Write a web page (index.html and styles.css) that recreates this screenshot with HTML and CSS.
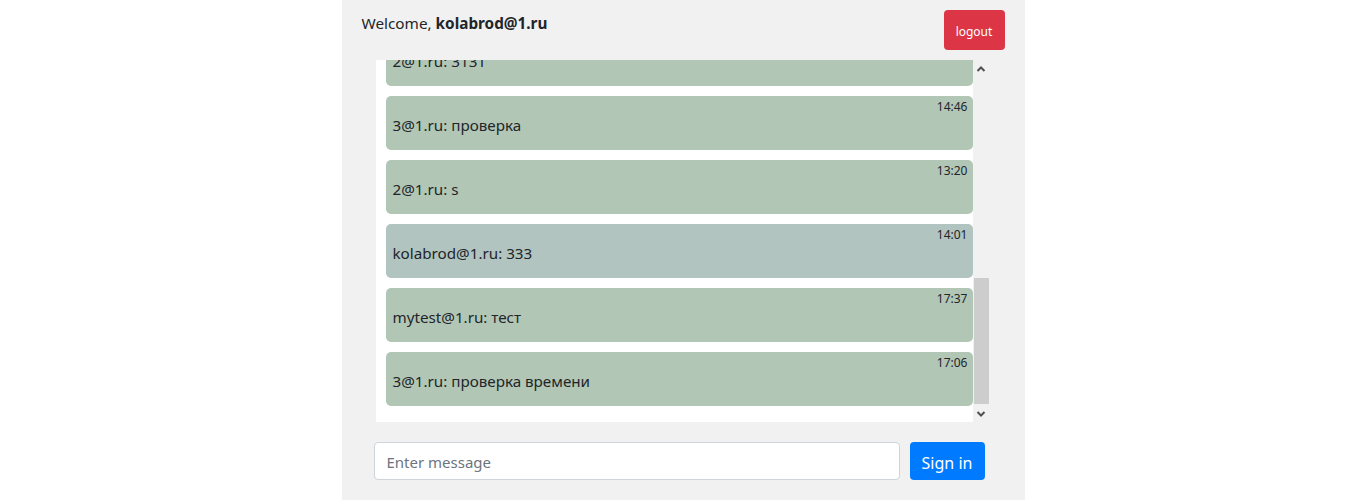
FILE: index.html
```html
<!DOCTYPE html>
<html>
<head>
<meta charset="utf-8">
<link rel="stylesheet" href="styles.css">
</head>
<body>
<div class="app">
  <header class="top">
    <div class="welcome">Welcome, <b>kolabrod@1.ru</b></div>
    <button class="logout">logout</button>
  </header>
  <div class="chat">
    <div class="viewport">
      <div class="list">
        <div class="msg"><div class="time">12:01</div><div class="text">2@1.ru: привет</div></div>
        <div class="msg"><div class="time">12:03</div><div class="text">3@1.ru: 111</div></div>
        <div class="msg me"><div class="time">12:05</div><div class="text">kolabrod@1.ru: hello</div></div>
        <div class="msg"><div class="time">12:10</div><div class="text">mytest@1.ru: 222</div></div>
        <div class="msg"><div class="time">12:14</div><div class="text">2@1.ru: test</div></div>
        <div class="msg"><div class="time">12:20</div><div class="text">3@1.ru: ок</div></div>
        <div class="msg me"><div class="time">12:31</div><div class="text">kolabrod@1.ru: 123</div></div>
        <div class="msg"><div class="time">12:45</div><div class="text">mytest@1.ru: привет</div></div>
        <div class="msg"><div class="time">13:02</div><div class="text">2@1.ru: 3131</div></div>
        <div class="msg"><div class="time">14:46</div><div class="text">3@1.ru: проверка</div></div>
        <div class="msg"><div class="time">13:20</div><div class="text">2@1.ru: s</div></div>
        <div class="msg me"><div class="time">14:01</div><div class="text">kolabrod@1.ru: 333</div></div>
        <div class="msg"><div class="time">17:37</div><div class="text">mytest@1.ru: тест</div></div>
        <div class="msg"><div class="time">17:06</div><div class="text">3@1.ru: проверка времени</div></div>
      </div>
    </div>
    <div class="sbar" aria-hidden="true">
      <div class="arrow"><svg width="10" height="10" viewBox="0 0 10 10"><path d="M1.5 7 L5 3.5 L8.5 7" fill="none" stroke="#505050" stroke-width="2"/></svg></div>
      <div class="track"><div class="thumb"></div></div>
      <div class="arrow"><svg width="10" height="10" viewBox="0 0 10 10"><path d="M1.5 3 L5 6.5 L8.5 3" fill="none" stroke="#505050" stroke-width="2"/></svg></div>
    </div>
  </div>
  <form class="send">
    <input class="field" type="text" placeholder="Enter message">
    <button class="signin" type="button">Sign in</button>
  </form>
</div>
</body>
</html>
```

FILE: styles.css
```css
html, body {
  margin: 0;
  padding: 0;
  background: #ffffff;
  font-family: "Noto Sans", "Open Sans", "Liberation Sans", sans-serif;
  color: #212529;
}
.app {
  width: 683px;
  height: 500px;
  margin: 0 auto;
  background: #f1f1f1;
  display: flex;
  flex-direction: column;
}
.top {
  display: flex;
  justify-content: space-between;
  align-items: flex-start;
  height: 60px;
  padding: 0 20px 0 20px;
}
.welcome {
  font-size: 15.3px;
  line-height: 24px;
  margin-top: 11px;
}
.welcome b { font-weight: 700; }
.logout {
  margin-top: 10px;
  width: 61px;
  height: 40px;
  border: none;
  border-radius: 4px;
  background: #dc3545;
  color: #fff;
  font-family: inherit;
  font-size: 12px;
  padding: 2px 0 0 0;
}
.chat {
  margin-left: 34px;
  width: 613px;
  height: 362px;
  background: #fff;
  display: flex;
}
.viewport {
  flex: 1;
  overflow-y: scroll;
  scrollbar-width: none;
  display: flex;
  flex-direction: column-reverse;
}
.viewport::-webkit-scrollbar { display: none; }
.list {
  padding: 10px 0 6px 10px;
}
.msg {
  height: 54px;
  box-sizing: border-box;
  margin-bottom: 10px;
  background: #b2c6b6;
  border-radius: 5px;
  padding: 4px 5px 0 7px;
}
.msg.me { background: #b2c4bf; }
.time {
  text-align: right;
  font-size: 12px;
  line-height: 13px;
}
.text {
  font-size: 15.2px;
  line-height: 24px;
}
.sbar {
  width: 16px;
  flex: none;
  background: #f1f1f1;
  display: flex;
  flex-direction: column;
}
.arrow {
  height: 17px;
  display: flex;
  align-items: center;
  justify-content: center;
}
.track {
  flex: 1;
  display: flex;
  flex-direction: column;
  justify-content: flex-end;
  padding: 0 0 1px 1px;
}
.thumb {
  height: 126px;
  background: #cdcdcd;
}
.send {
  margin: 20px 0 0 32px;
  width: 611px;
  display: flex;
  gap: 10px;
}
.field {
  flex: 1;
  height: 38px;
  box-sizing: border-box;
  border: 1px solid #ced4da;
  border-radius: 4px;
  padding: 2px 12px 0 12px;
  font-family: inherit;
  font-size: 15px;
  color: #495057;
  background: #fff;
}
.field::placeholder { color: #6c757d; }
.signin {
  width: 75px;
  height: 38px;
  border: none;
  border-radius: 4px;
  background: #007bff;
  color: #fff;
  font-family: inherit;
  font-size: 16px;
  padding: 3px 0 0 0;
}
```
